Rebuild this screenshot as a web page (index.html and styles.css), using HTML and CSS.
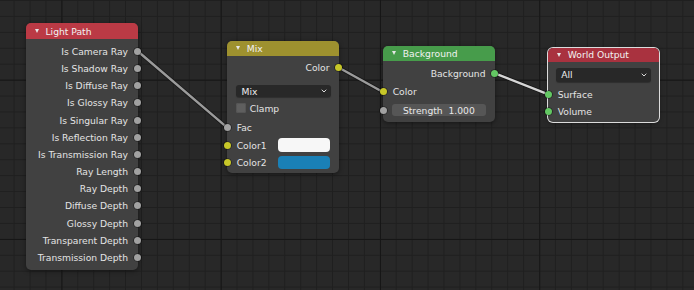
FILE: index.html
```html
<!DOCTYPE html>
<html lang="en">
<head>
    <meta charset="UTF-8">
    <title>Node Editor</title>
    <link rel="stylesheet" href="styles.css">
</head>
<body>
<div class="canvas">

    <!-- links between sockets: dark outline first, then the core -->
    <svg class="wires" width="694" height="290" viewBox="0 0 694 290">
        <g class="wire-outline">
            <line x1="137.5" y1="51" x2="227.3" y2="127.7"/>
            <line x1="339" y1="67.7" x2="383.3" y2="92.3"/>
            <line x1="495" y1="73.3" x2="548.3" y2="94.3"/>
        </g>
        <g class="wire">
            <line x1="137.5" y1="51" x2="227.3" y2="127.7"/>
            <line x1="339" y1="67.7" x2="383.3" y2="92.3"/>
        </g>
        <g class="wire wire-active">
            <line x1="495" y1="73.3" x2="548.3" y2="94.3"/>
        </g>
    </svg>

    <!-- Light Path -->
    <div class="node node-lightpath">
        <div class="node-header header-input"><span class="arrow"></span>Light Path</div>
        <div class="node-body">
            <div class="row out">Is Camera Ray<span class="socket gray"></span></div>
            <div class="row out">Is Shadow Ray<span class="socket gray"></span></div>
            <div class="row out">Is Diffuse Ray<span class="socket gray"></span></div>
            <div class="row out">Is Glossy Ray<span class="socket gray"></span></div>
            <div class="row out">Is Singular Ray<span class="socket gray"></span></div>
            <div class="row out">Is Reflection Ray<span class="socket gray"></span></div>
            <div class="row out">Is Transmission Ray<span class="socket gray"></span></div>
            <div class="row out">Ray Length<span class="socket gray"></span></div>
            <div class="row out">Ray Depth<span class="socket gray"></span></div>
            <div class="row out">Diffuse Depth<span class="socket gray"></span></div>
            <div class="row out">Glossy Depth<span class="socket gray"></span></div>
            <div class="row out">Transparent Depth<span class="socket gray"></span></div>
            <div class="row out">Transmission Depth<span class="socket gray"></span></div>
        </div>
    </div>

    <!-- Mix -->
    <div class="node node-mix">
        <div class="node-header header-color"><span class="arrow"></span>Mix</div>
        <div class="node-body">
            <div class="row out">Color<span class="socket yellow"></span></div>
            <div class="select select-mix">
                <span>Mix</span>
                <svg class="chevron" width="6" height="4" viewBox="0 0 6 4"><path d="M0.7 0.7 L3 3 L5.3 0.7"/></svg>
            </div>
            <div class="row check"><span class="checkbox"></span>Clamp</div>
            <div class="row in"><span class="socket gray"></span>Fac</div>
            <div class="row in"><span class="socket yellow"></span>Color1<span class="swatch white"></span></div>
            <div class="row in"><span class="socket yellow"></span>Color2<span class="swatch blue"></span></div>
        </div>
    </div>

    <!-- Background -->
    <div class="node node-background">
        <div class="node-header header-shader"><span class="arrow"></span>Background</div>
        <div class="node-body">
            <div class="row out">Background<span class="socket green"></span></div>
            <div class="row in">
                <span class="socket yellow"></span>Color
            </div>
            <div class="row in">
                <span class="socket gray"></span>
                <div class="field">Strength&nbsp; 1.000</div>
            </div>
        </div>
    </div>

    <!-- World Output -->
    <div class="node node-output active">
        <div class="node-header header-output"><span class="arrow"></span>World Output</div>
        <div class="node-body">
            <div class="select select-all">
                <span>All</span>
                <svg class="chevron" width="6" height="4" viewBox="0 0 6 4"><path d="M0.7 0.7 L3 3 L5.3 0.7"/></svg>
            </div>
            <div class="row in"><span class="socket green"></span>Surface</div>
            <div class="row in"><span class="socket green"></span>Volume</div>
        </div>
    </div>

</div>
</body>
</html>
```

FILE: styles.css
```css
body {
    margin: 0;
    padding: 0;
    background-color: #282828;
    font-family: 'DejaVu Sans', 'Liberation Sans', sans-serif;
}

.canvas {
    position: relative;
    width: 694px;
    height: 290px;
    overflow: hidden;
    background-color: #282828;
    background-image:
        linear-gradient(to right, #161616 1px, transparent 1px),
        linear-gradient(to bottom, #161616 1px, transparent 1px),
        linear-gradient(to right, #1f1f1f 1px, transparent 1px),
        linear-gradient(to bottom, #1f1f1f 1px, transparent 1px);
    background-size: 159.3px 100%, 100% 159.3px, 15.93px 100%, 100% 15.93px;
    background-position: 61.4px 0, 0 79.7px, 13.6px 0, 0 0;
}

/* links */
.wires {
    position: absolute;
    left: 0;
    top: 0;
}

.wire-outline line {
    stroke: rgba(20, 20, 20, 0.85);
    stroke-width: 4;
    stroke-linecap: round;
}

.wire line {
    stroke: #9b9b9b;
    stroke-width: 2.4;
    stroke-linecap: round;
}

.wire-active line {
    stroke: #d6d6d6;
}

/* nodes */
.node {
    position: absolute;
    width: 112px;
    background-color: #414141;
    border-radius: 5px;
    box-shadow: 0 1px 5px rgba(0, 0, 0, 0.45);
    color: #e4e4e4;
    font-size: 9.2px;
    z-index: 2;
}

.node.active {
    box-shadow: 0 0 0 1px #dcdcdc, 0 1px 5px rgba(0, 0, 0, 0.45);
}

.node-header {
    height: 15px;
    display: flex;
    align-items: center;
    padding-left: 8.5px;
    border-radius: 5px 5px 0 0;
    color: #f2f2f2;
}

.arrow {
    width: 0;
    height: 0;
    border-left: 2px solid transparent;
    border-right: 2px solid transparent;
    border-top: 4px solid #e6e6e6;
    margin-right: 7px;
}

.header-input { background-color: #bb3a45; }
.header-color { background-color: #9e912f; }
.header-shader { background-color: #479c4b; }
.header-output { background-color: #a9323f; }

.row {
    position: relative;
    height: 17.2px;
    display: flex;
    align-items: center;
    white-space: nowrap;
}

.row.out {
    justify-content: flex-end;
    padding-right: 9.5px;
}

.row.in,
.row.check {
    padding-left: 9.4px;
}

.socket {
    position: absolute;
    top: 50%;
    width: 7px;
    height: 7px;
    margin-top: -3.5px;
    border-radius: 50%;
    box-shadow: 0 0 0 0.6px rgba(0, 0, 0, 0.6);
}

.row.out .socket { right: -3.5px; }
.row.in .socket { left: -3.5px; }

.socket.gray { background-color: #a1a1a1; }
.socket.yellow { background-color: #c7c729; }
.socket.green { background-color: #63c763; }

/* widgets */
.select {
    display: flex;
    align-items: center;
    justify-content: space-between;
    background-color: #282828;
    border-radius: 3px;
    padding: 0 4px 0 5.5px;
    color: #eeeeee;
    box-shadow: 0 1px 1px rgba(0, 0, 0, 0.3);
}

.chevron path {
    fill: none;
    stroke: #d8d8d8;
    stroke-width: 1;
}

.checkbox {
    width: 10px;
    height: 10px;
    margin-left: -0.4px;
    margin-right: 3.5px;
    background-color: #5f5f5f;
    border-radius: 2px;
    box-shadow: inset 0 0 0 1px #555;
}

.swatch {
    margin-left: auto;
    margin-right: 9px;
    width: 52px;
    height: 13.5px;
    border-radius: 4px;
}

.swatch.white { background-color: #f7f7f7; }
.swatch.blue { background-color: #1a80b6; }

.field {
    flex: 1;
    height: 12px;
    margin-left: -0.7px;
    margin-right: 9.3px;
    display: flex;
    align-items: center;
    justify-content: center;
    background-color: #565656;
    border-radius: 3px;
    color: #e8e8e8;
}

/* node placement on the canvas */
.node-lightpath {
    left: 26px;
    top: 23.3px;
    width: 111.5px;
}

.node-lightpath .node-header { height: 16px; }
.node-lightpath .node-body { padding: 3.4px 0; }

.node-mix {
    left: 227.3px;
    top: 40.7px;
    width: 111.7px;
}

.node-mix .node-body { padding: 3.4px 0 1.7px; }
.select-mix {
    height: 12.3px;
    margin: 8.7px 8px 2.6px 8.7px;
}
.node-mix .row.in { margin-top: 0.3px; }
.node-mix .row.check + .row.in { margin-top: 2px; }

.node-background {
    left: 383.3px;
    top: 46px;
    width: 111.7px;
}

.node-background .node-header { height: 14.7px; }
.node-background .node-body { padding: 4px 0 3.1px; }
.node-background .row.in { margin-top: 1.4px; }

.node-output {
    left: 548.3px;
    top: 48.3px;
    width: 110.7px;
}

.node-output .node-header { height: 13.4px; }
.node-output .node-body { padding: 0 0 2.4px; }
.select-all {
    height: 14px;
    margin: 6px 8px 4px 7.4px;
}
```
